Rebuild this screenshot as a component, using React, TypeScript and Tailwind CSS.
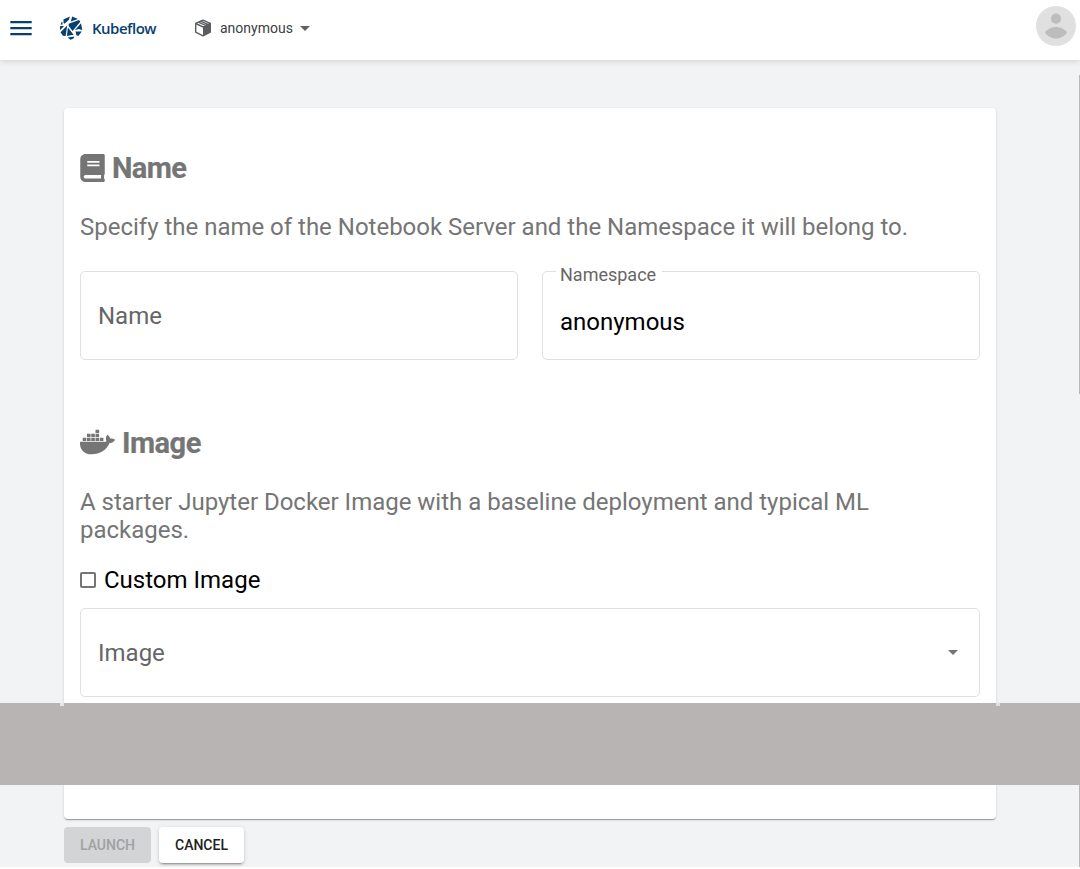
import React from "react";
import { FaBook, FaDocker } from "react-icons/fa";

function KubeflowMark() {
  return (
    <svg className="h-[24px] w-[24px] shrink-0" viewBox="0 0 24 24" fill="#07406f">
      <path d="M4.400 3.400 10.800.5 9.900 3.800 5.400 7.700 4.600 7z" />
      <path d="M3.200 5.300 3.700 8.600 1.400 8.500z" />
      <path d="M1.100 10 5 10.100.9 14.300z" />
      <path d="M1.500 16.200 8.200 9.500 6.600 20.100 3.900 19.700z" />
      <path d="M13.200.4 19 2.900 11.800 5.400z" />
      <path d="M9.700 7.800 20 3.900l1.300 1.800-7.700 9.200-3.900-5z" />
      <path d="M8.900 11.600 14.600 18.700 7.900 19.900z" />
      <path d="M15.800 14.200 22 7.300 23.300 13.900 19.600 13.100z" />
      <path d="M16.500 15.500 22.800 15.400 19.300 20 17.400 19.200z" />
      <path d="m8.700 21.600 6.900-1.200-1.500 2.400-2.800 1z" />
    </svg>
  );
}

function PackageMark() {
  return (
    <svg className="h-[18px] w-[18px] shrink-0" viewBox="0 0 18 18">
      <path d="m9 1.100 7.300 3.200v8.900L9 16.900l-7.300-3.700V4.300z" fill="#fff" stroke="#5b5d60" strokeWidth="1.400" strokeLinejoin="round" />
      <path d="M9 8.200 16.300 4.800v8.400L9 16.900z" fill="#5b5d60" />
      <path d="m1.700 4.500 7.300 3.500 7.300-3.600M4.400 3.200l7.200 3.200v2.500M6.700 2.200l7.200 3.200" fill="none" stroke="#5b5d60" strokeWidth="1.400" />
    </svg>
  );
}

function Avatar() {
  return (
    <svg className="h-10 w-10 shrink-0" viewBox="0 0 40 40">
      <circle cx="20" cy="20" r="20" fill="#e0e0e0" />
      <circle cx="20" cy="12.600" r="5.100" fill="#bdbdbd" />
      <path d="M9 26.400c2.200-3.300 6.400-5.400 11-5.400s8.800 2.100 11 5.400c-2.400 3.600-6.400 6-11 6s-8.600-2.400-11-6z" fill="#bdbdbd" />
    </svg>
  );
}

function Header() {
  return (
    <header className="relative z-10 flex h-[60px] shrink-0 items-start bg-white shadow-[0_1px_6px_rgba(0,0,0,0.15)]">
      <button aria-label="Menu" className="ml-[10px] mt-[20px] h-[16px] w-[22px]">
        <svg className="h-4 w-[22px]" viewBox="0 0 22 16" fill="#07406f">
          <path d="M.3.900h21.400v2.300H.3zM.3 6.900h21.400v2.300H.3zM.3 12.900h21.400v2.300H.3z" />
        </svg>
      </button>
      <div className="ml-[27px] mt-4 flex h-6 items-center">
        <KubeflowMark />
        <span className="ml-[9px] w-[67px] font-['Open_Sans',sans-serif] text-[15px] font-semibold tracking-[-0.5px] text-[#07406f]">Kubeflow</span>
      </div>
      <button className="ml-[34.5px] mt-[18px] flex h-5 items-center text-[14px] text-[#3c4043]">
        <PackageMark />
        <span className="ml-[8.5px]">anonymous</span>
        <svg className="ml-[7px] h-[5px] w-[10px]" viewBox="0 0 10 5" fill="#5f6368"><path d="M0 0h10L5 5z" /></svg>
      </button>
      <div className="ml-auto mr-1 mt-[6px]"><Avatar /></div>
    </header>
  );
}

export default function App() {
  return (
    <div className="relative flex h-[869px] w-[1080px] flex-col overflow-hidden bg-white font-['Roboto',sans-serif]">
      <Header />
      <main className="flex h-[807px] flex-col bg-[#f1f3f5] pl-16 pt-12">
        <section className="h-[711px] w-[932px] shrink-0 rounded-[4px] bg-white px-4 shadow-[0_2px_1px_-1px_rgba(0,0,0,0.2),0_1px_1px_0_rgba(0,0,0,0.14),0_1px_3px_0_rgba(0,0,0,0.12)]">
          <h2 className="mt-[43px] flex h-[33px] items-center text-[29px] font-bold text-[#757575]">
            <FaBook className="mr-[7px] mt-px h-[28px] w-[25px]" />
            <span className="pt-[3px] tracking-[-0.6px] [-webkit-text-stroke:0.2px_#757575]">Name</span>
          </h2>
          <p className="mt-[29px] text-[24px] leading-[28px] tracking-[-0.01px] text-[#757575]">Specify the name of the Notebook Server and the Namespace it will belong to.</p>
          <div className="mt-[30px] flex gap-6">
            <div className="flex h-[89px] w-[438px] items-center rounded-[5px] border border-[#e0e0e0] px-[17px] text-[24px] text-[#666]">Name</div>
            <fieldset className="relative h-[89px] w-[438px] rounded-[5px] border border-[#e0e0e0] px-[17px]">
              <label className="absolute left-[13px] top-[-8px] bg-white pl-1 pr-[6px] text-[18px] leading-[22px] text-[#666]">Namespace</label>
              <div className="pt-[36px] text-[24px] leading-[28px] text-black">anonymous</div>
            </fieldset>
          </div>
          <h2 className="mt-[66px] flex h-[33px] items-center text-[29px] font-bold text-[#757575]">
            <FaDocker className="mb-[2px] mr-[7px] h-[28px] w-[35px]" />
            <span className="pt-[3px] tracking-[-0.5px] [-webkit-text-stroke:0.2px_#757575]">Image</span>
          </h2>
          <p className="mt-[29px] w-[820px] text-[24px] leading-[28px] tracking-[-0.01px] text-[#757575]">A starter Jupyter Docker Image with a baseline deployment and typical ML packages.</p>
          <label className="mt-[22px] flex h-[28px] items-center gap-2 text-[24px] text-black">
            <span className="h-4 w-4 rounded-[2px] border-2 border-[#757575]" />
            Custom Image
          </label>
          <div className="mt-[14px] flex h-[89px] items-center justify-between rounded-[5px] border border-[#e0e0e0] pl-[17px] pr-[21px] text-[24px] text-[#666]">
            Image
            <svg className="h-[5px] w-[10px]" viewBox="0 0 10 5" fill="#757575"><path d="M0 0h10L5 5z" /></svg>
          </div>
        </section>
        <div className="mt-2 flex gap-2 text-[14px] font-medium">
          <button disabled className="h-9 w-[87px] rounded-[4px] bg-[#d3d4d6] text-[#a0a1a3]">LAUNCH</button>
          <button className="h-9 w-[85px] rounded-[4px] bg-white text-[#212121] shadow-[0_3px_1px_-2px_rgba(0,0,0,0.2),0_2px_2px_0_rgba(0,0,0,0.14),0_1px_5px_0_rgba(0,0,0,0.12)]">CANCEL</button>
        </div>
      </main>
      <div className="absolute right-0 top-[75px] h-[319px] w-px bg-[#b8b8b8]" />
      <div className="absolute right-0 top-[785px] h-[82px] w-px bg-[#b8b8b8]" />
      <div className="absolute left-0 top-[703px] flex h-[82px] w-full items-start bg-[#b8b4b3]">
        <span className="ml-[60px] h-[3px] w-1 bg-[#e5e6e7]" />
        <span className="ml-[932px] h-[3px] w-1 bg-[#dcdfe0]" />
      </div>
    </div>
  );
}
